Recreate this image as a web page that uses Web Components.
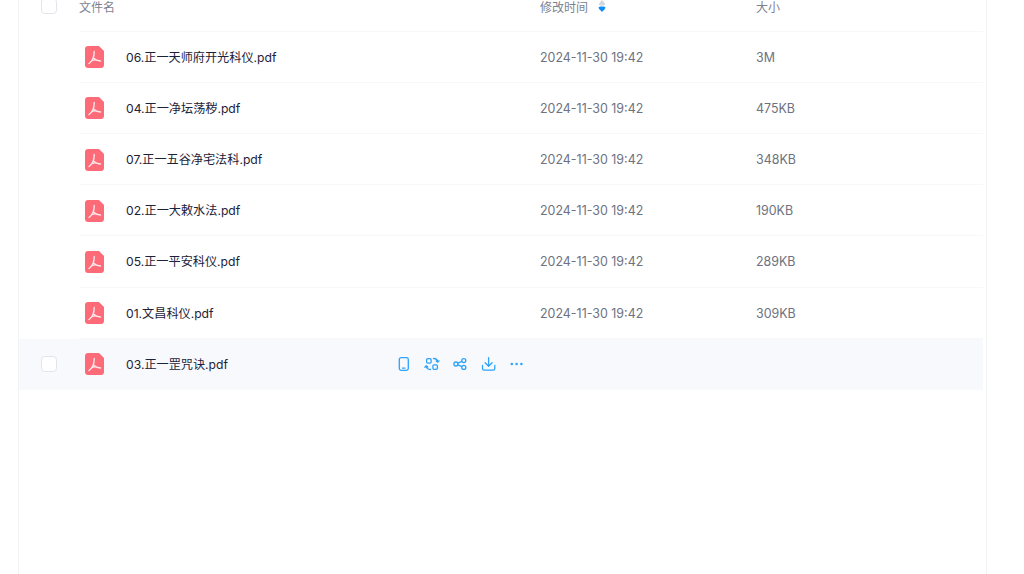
<!DOCTYPE html>
<html lang="zh">
<head>
<meta charset="utf-8">
<title>文件列表</title>
<style>
  html, body { margin: 0; height: 100%; overflow: hidden; background: #fff; }
  body { font-family: Inter, "Noto Sans CJK SC", sans-serif; }
</style>
</head>
<body>
<file-table></file-table>

<template id="file-table-tpl">
  <style>
    :host {
      display: block;
      box-sizing: border-box;
      width: 969px;
      height: 613px;
      margin: -19.6px 0 0 18px;
      border-left: 1px solid #f3f3f5;
      border-right: 1px solid #f3f3f5;
      padding-right: 3px;
    }
  </style>
  <file-head></file-head>
  <slot></slot>
</template>

<template id="file-head-tpl">
  <style>
    :host {
      display: grid;
      grid-template-columns: 60px 461px 216px 1fr;
      height: 51.2px;
      align-items: center;
      font-size: 12px;
      color: #7d8290;
      box-sizing: border-box;
      position: relative;
    }
    :host::after {
      content: "";
      position: absolute;
      left: 60px; right: 0; bottom: 0;
      border-bottom: 1px solid #f7f7f9;
    }
    .check { width: 16px; height: 16px; box-sizing: border-box; margin-left: 22px; border: 1px solid #e3e5ea; border-radius: 4px; background: #fff; }
    .sort { display: flex; align-items: center; gap: 10px; }
    svg { display: block; }
  </style>
  <div class="check"></div>
  <div>文件名</div>
  <div class="sort">修改时间
    <svg width="8" height="12" viewBox="0 0 8 12">
      <path d="M4 0C5.300 1.400 7 3 7 4.200 7 5.200 6 5.600 4 5.600S1 5.200 1 4.200C1 3 2.700 1.400 4 0Z" fill="#d3d6dd"/>
      <path d="M4 12C2.700 10.600 .5 9 .5 7.600 .5 6.800 2 6.400 4 6.400S7.500 6.800 7.500 7.600C7.500 9 5.300 10.600 4 12Z" fill="#0d8cf7"/>
    </svg>
  </div>
  <div>大小</div>
</template>

<template id="file-row-tpl">
  <style>
    :host {
      display: grid;
      grid-template-columns: 60px 461px 216px 1fr;
      height: 51.2px;
      align-items: center;
      position: relative;
      font-size: 12.45px;
      color: #6d7280;
      box-sizing: border-box;
    }
    :host::after {
      content: "";
      position: absolute;
      left: 60px; right: 0; bottom: 0;
      border-bottom: 1px solid #f7f7f9;
    }
    :host([active]) { background: #f7f9fd; }
    :host([active])::after { display: none; }
    .check { visibility: hidden; width: 16px; height: 16px; box-sizing: border-box; margin-left: 22px; border: 1px solid #e3e5ea; border-radius: 4px; background: #fff; }
    :host([active]) .check { visibility: visible; }
    .name { display: flex; align-items: center; color: #1d2238; font-size: 12.15px; }
    .pdf { display: block; margin-left: 6px; margin-right: 22px; flex: none; }
    .label { flex: none; width: 269px; padding-bottom: 2px; }
    .actions { display: none; align-items: center; gap: 10px; }
    :host([active]) .actions { display: flex; }
    :host([active]) .date, :host([active]) .size { visibility: hidden; }
    svg { display: block; }
    .actions svg { fill: none; stroke: #2fa3f9; stroke-width: 1.3; stroke-linecap: round; stroke-linejoin: round; }
    .pdf .glyph { fill: none; stroke: #ffe6e9; stroke-width: 1.4; stroke-linecap: round; stroke-linejoin: round; }
  </style>
  <div class="check"></div>
  <div class="name">
    <svg class="pdf" width="19" height="22" viewBox="0 0 19 22">
      <path d="M3 0H14L19 5V19C19 20.700 17.700 22 16 22H3C1.300 22 0 20.700 0 19V3C0 1.300 1.300 0 3 0Z" fill="#fd6a78"/>
      <path class="glyph" d="M9.200 5.500C9.200 8 9 10.500 8 12.500 7 14.500 5.500 16.500 4 17.500M8.400 12C10 13.500 12.500 14.800 15.500 15M7 14.600C9 13.700 11 13.700 13 14.400"/>
    </svg>
    <span class="label"><slot></slot></span>
    <span class="actions">
      <svg width="18" height="18" viewBox="0 0 18 18"><rect x="4.300" y="2.700" width="9" height="12.600" rx="1.800"/><path d="M7.500 13.100H10"/></svg>
      <svg width="18" height="18" viewBox="0 0 18 18"><rect x="3.600" y="3.600" width="4.500" height="4.500" rx="1.100"/><rect x="9.900" y="9.900" width="4.500" height="4.500" rx="1.100"/><path d="M10.500 3.500C12.500 3.500 14.500 4.500 14.800 7M13.200 6 14.800 7.200 16 5.800M7.500 14.500C5.500 14.500 3.500 13.500 3.200 11M1.900 12.200 3.200 10.800 4.800 12"/></svg>
      <svg width="18" height="18" viewBox="0 0 18 18"><circle cx="4.900" cy="9" r="2"/><circle cx="12.800" cy="5.600" r="2"/><circle cx="12.800" cy="12.400" r="2"/><path d="M6.800 8.200 10.900 6.400M6.800 9.800 10.900 11.600"/></svg>
      <svg width="18" height="18" viewBox="0 0 18 18"><path d="M9.600 2.600V11M6.100 7.700 9.600 11.200 13.100 7.700M3.500 10.500V13.500C3.500 14.600 4.100 15.200 5.100 15.200H14.100C15.100 15.200 15.800 14.600 15.800 13.500V10.500"/></svg>
      <svg width="18" height="18" viewBox="0 0 18 18" style="stroke:none;fill:#2fa3f9"><circle cx="4.800" cy="9" r="1.300"/><circle cx="9.600" cy="9" r="1.300"/><circle cx="14.400" cy="9" r="1.300"/></svg>
    </span>
  </div>
  <div class="date"><slot name="date"></slot></div>
  <div class="size"><slot name="size"></slot></div>
</template>

<script>
  // every element here just clones its template into an open shadow root
  function define(tag) {
    customElements.define(tag, class extends HTMLElement {
      constructor() {
        super();
        this.attachShadow({ mode: "open" });
        this.shadowRoot.appendChild(document.getElementById(tag + "-tpl").content.cloneNode(true));
      }
    });
  }
  define("file-head");
  define("file-row");
  define("file-table");

  const files = [
    ["06.正一天师府开光科仪.pdf", "3M"],
    ["04.正一净坛荡秽.pdf", "475KB"],
    ["07.正一五谷净宅法科.pdf", "348KB"],
    ["02.正一大敕水法.pdf", "190KB"],
    ["05.正一平安科仪.pdf", "289KB"],
    ["01.文昌科仪.pdf", "309KB"],
    ["03.正一罡咒诀.pdf", ""],
  ];
  const table = document.querySelector("file-table");
  files.forEach(([name, size], i) => {
    const row = document.createElement("file-row");
    if (i === files.length - 1) row.setAttribute("active", "");
    row.innerHTML = `${name}<span slot="date">2024-11-30 19:42</span><span slot="size">${size}</span>`;
    table.appendChild(row);
  });
</script>
</body>
</html>
